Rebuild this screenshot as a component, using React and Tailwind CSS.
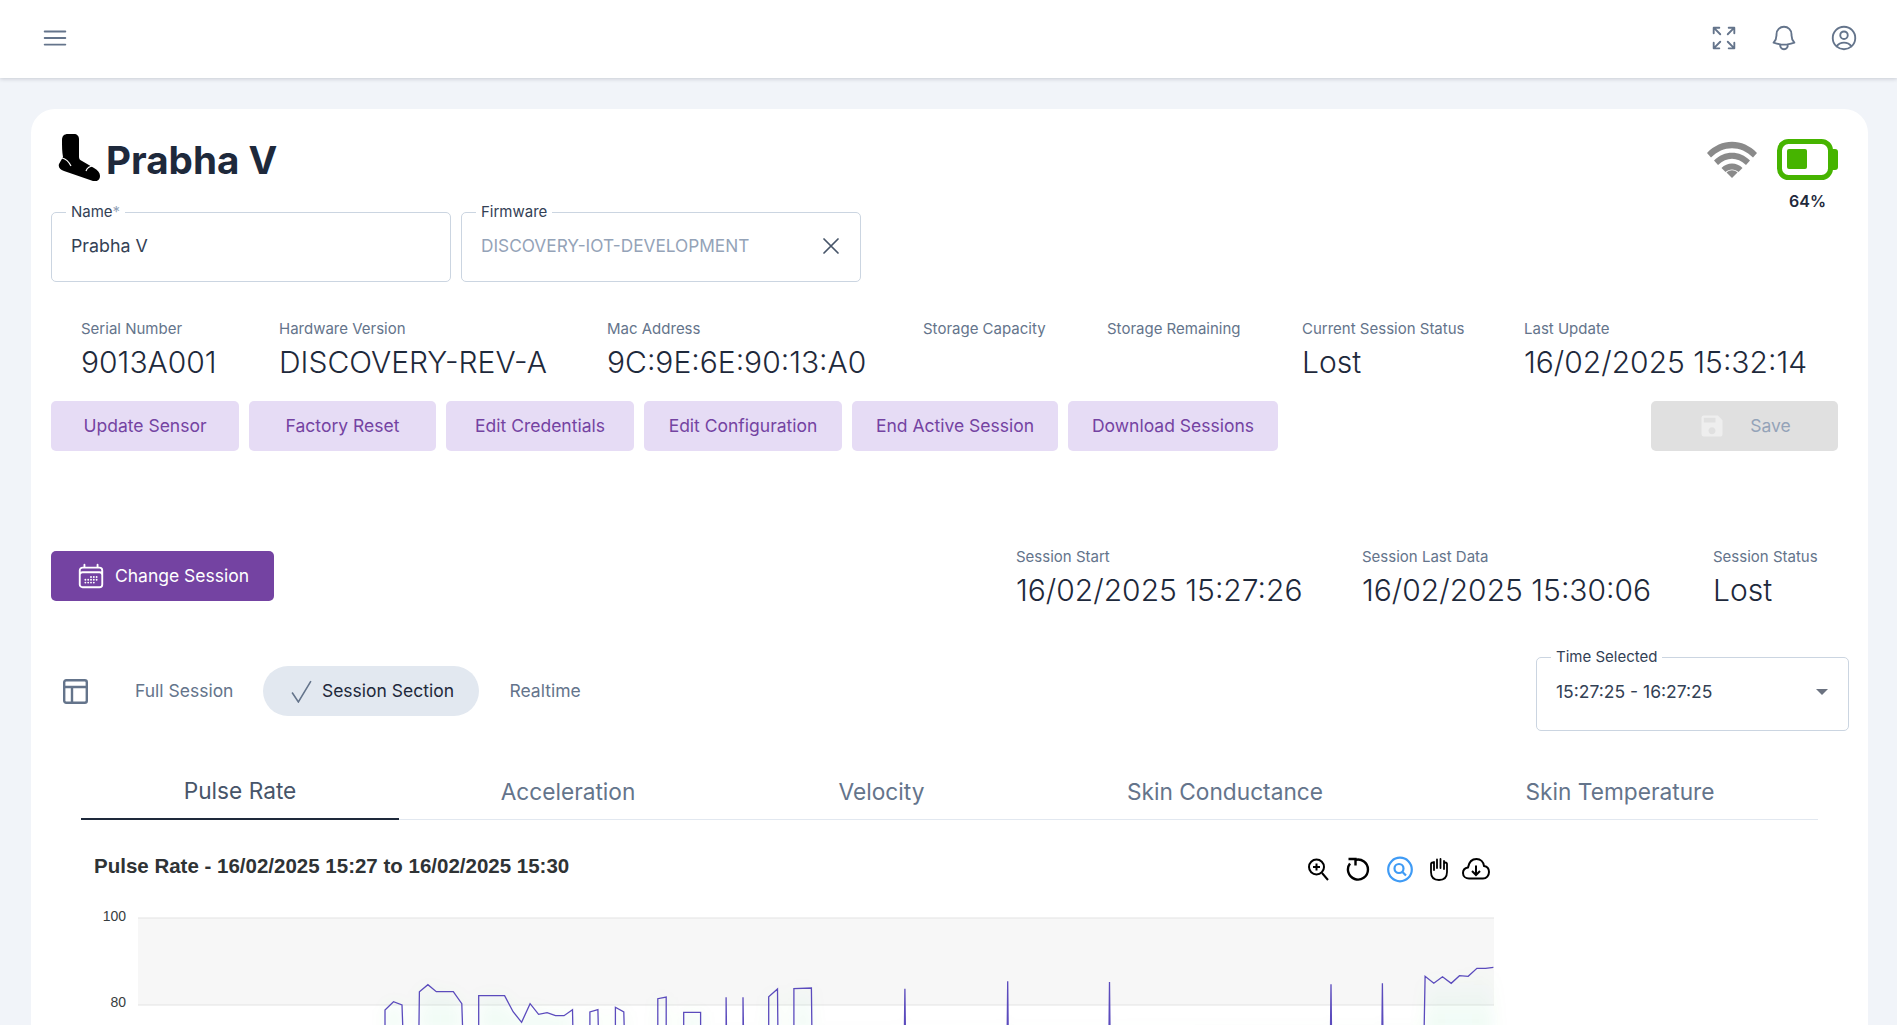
import { HiOutlineBars3, HiOutlineArrowsPointingOut, HiOutlineBell, HiOutlineUserCircle, HiOutlineCalendarDays, HiOutlineXMark } from 'react-icons/hi2';
import { MdSave } from 'react-icons/md';

const FONT = "font-['Inter',sans-serif]";

const details = [
  ['Serial Number', '9013A001'],
  ['Hardware Version', 'DISCOVERY-REV-A'],
  ['Mac Address', '9C:9E:6E:90:13:A0'],
  ['Storage Capacity', ''],
  ['Storage Remaining', ''],
  ['Current Session Status', 'Lost'],
  ['Last Update', '16/02/2025 15:32:14'],
];

const actions = [
  ['Update Sensor', 'w-[188px]'],
  ['Factory Reset', 'w-[187px]'],
  ['Edit Credentials', 'w-[188px]'],
  ['Edit Configuration', 'w-[198px]'],
  ['End Active Session', 'w-[206px]'],
  ['Download Sessions', 'w-[210px]'],
];

const tabs = [
  ['Pulse Rate', 'w-[318px]'],
  ['Acceleration', 'w-[338px]'],
  ['Velocity', 'w-[289px]'],
  ['Skin Conductance', 'w-[398px]'],
  ['Skin Temperature', 'w-[392px]'],
];

// traced from the reference: [x, y] in crop coords
const z4 = [[728,575],[728,513],[747,488],[766,498],[768,575],[804,575],[805,458],[824,437],[843,458],[881,458],[900,494],[902,575],[938,575],[938,470],[996,470],[1015,518],[1034,550],[1053,494],[1072,526],[1091,521],[1110,530],[1129,530],[1148,512],[1149,575],[1187,575],[1187,519],[1205,512],[1206,575],[1244,575],[1244,505],[1263,519],[1264,575],[1339,575],[1339,479],[1358,474],[1358,575],[1397,575],[1397,520],[1435,520],[1435,575],[1492,575],[1492,475],[1493,575],[1530,575],[1530,475],[1531,575]];
const z5 = [[18,575],[18,473],[36,450],[37,575],[70,575],[70,449],[106,447],[107,575],[298,575],[299,449],[300,575],[510,575],[511,427],[512,575],[720,575],[721,429],[722,575],[1177,575],[1178,436],[1179,575],[1283,575],[1284,433],[1285,575],[1370,575],[1372,412],[1390,433],[1408,413],[1426,433],[1443,410],[1461,412],[1479,388],[1497,388],[1513,385]];
const linePoints = [
  ...z4.map(([x, y]) => [60 + x / 2.24, 840 + y / 3]),
  ...z5.map(([x, y]) => [760 + x / 2.063, 840 + y / 3]),
].map(([x, y]) => `${x.toFixed(1)},${y.toFixed(1)}`).join(' ');

function Outlined({ label, className, children }) {
  return (
    <div className={`relative rounded-[5px] border border-[#cbd5e1] ${className}`}>
      <span className="absolute -top-[10px] left-[14px] bg-white px-[5px] text-[15px] leading-[18px] text-[#334155]">{label}</span>
      {children}
    </div>
  );
}

function Stat({ label, value, className = '' }) {
  return (
    <div className={className}>
      <p className="text-[15px] leading-[18px] text-[#64748b]">{label}</p>
      <p className="mt-[6px] h-[36px] text-[30px] leading-[36px] font-light whitespace-nowrap text-[#1e293b]">{value}</p>
    </div>
  );
}

function SockIcon() {
  return (
    <svg viewBox="0 0 42 48" className="w-[42px] h-[48px]">
      <path d="M4 7c0-4 2-6 6-6h6c3 0 5 2 5 5v18c0 2 1 3 3 4l12 7c4 2 6 5 6 8 0 4-3 6-7 5L6 38c-4-1-6-4-5-7l4-7c-1-5-1-11-1-17z" fill="#000" />
      <path d="M4 25c4 1 7 4 9 8" stroke="#fff" strokeWidth="1.2" fill="none" />
      <path d="M28 38c1-3 4-5 8-5" stroke="#fff" strokeWidth="1.2" fill="none" />
    </svg>
  );
}

function WifiIcon() {
  return (
    <svg viewBox="0 0 50 37" className="w-[50px] h-[37px]" fill="#8a8a8a">
      <path d="M0 12C14 -3 36 -3 50 12l-4 4.500C34 4 16 4 4 16.500z" />
      <path d="M7 19.500C17 9 33 9 43 19.500l-4 4.500C30 15.500 20 15.500 11 24z" />
      <path d="M14.500 27C20 21 30 21 35.500 27l-4 4C28 27.500 22 27.500 18.500 31z" />
      <path d="M19.500 31.500C23 28.500 27 28.500 30.500 31.500L25 37z" />
    </svg>
  );
}

function BatteryIcon() {
  return (
    <svg viewBox="0 0 61 41" className="w-[61px] h-[41px]">
      <rect x="2.500" y="2.500" width="51" height="36" rx="9" fill="none" stroke="#46b400" strokeWidth="5" />
      <path d="M55 10h3a3 3 0 0 1 3 3v15a3 3 0 0 1-3 3h-3z" fill="#46b400" />
      <rect x="10" y="10" width="20" height="20" rx="2" fill="#46b400" />
    </svg>
  );
}

function LayoutIcon() {
  return (
    <svg viewBox="0 0 25 25" className="w-[25px] h-[25px]" fill="none" stroke="#64748b" strokeWidth="2.400">
      <rect x="1.200" y="1.200" width="22.600" height="22.600" rx="2" />
      <path d="M1 8h23M9 8v16" />
    </svg>
  );
}

function ChartTools() {
  return (
    <div className="flex items-center mt-[6px]">
      <svg viewBox="0 0 22 24" className="w-[22px] h-[24px]" fill="none" stroke="#000" strokeWidth="2">
        <circle cx="9.500" cy="10" r="7.500" />
        <path d="M15 16l6 7M9.500 6.500v7M6 10h7" />
      </svg>
      <svg viewBox="0 0 24 24" className="w-[24px] h-[24px] ml-[17px]" fill="none" stroke="#000" strokeWidth="2.400">
        <path d="M9 3a10 10 0 1 1-5 3.500" />
        <path d="M2.500 2h7v6.500" />
      </svg>
      <svg viewBox="0 0 26 27" className="w-[26px] h-[27px] ml-[17px]" fill="none" stroke="#3f9bf5" strokeWidth="2.200">
        <circle cx="13" cy="13.500" r="11.800" />
        <circle cx="12" cy="12.500" r="4.500" />
        <path d="M15.500 16l3.500 3.500" />
      </svg>
      <svg viewBox="0 0 20 24" className="w-[20px] h-[24px] ml-[16px]" fill="none" stroke="#000" strokeWidth="1.800" strokeLinecap="round">
        <path d="M5 13V5M8 11V2.500M11.500 11V2M15 12V4M5 7c0-2-3-2-3 0v8c0 5 3 8 8 8s8-3 8-8V7c0-2-3-2-3 0" />
      </svg>
      <svg viewBox="0 0 28 22" className="w-[28px] h-[22px] ml-[13px]" fill="none" stroke="#000" strokeWidth="2">
        <path d="M7 20.500c-3 0-6-2-6-5.500 0-3 2-5 5-5.500C7 4 10.500 1 14.500 1c4 0 7 3 7.500 7 3 .5 5 3 5 6 0 3.500-2.500 6.500-6 6.500z" />
        <path d="M14 7.500v9M10 13l4 4 4-4" />
      </svg>
    </div>
  );
}

function PulseChart() {
  return (
    <svg viewBox="81 905 1440 130" className="block w-[1440px] h-[130px] mt-[20px]">
      <defs>
        <linearGradient id="pulseFill" x1="0" y1="0" x2="0" y2="1">
          <stop offset="0" stopColor="#22c55e" stopOpacity="0" />
          <stop offset="1" stopColor="#22c55e" stopOpacity="0.07" />
        </linearGradient>
        <filter id="pulseBlur" x="-5%" y="-20%" width="110%" height="140%">
          <feGaussianBlur stdDeviation="8" />
        </filter>
      </defs>
      <rect x="138" y="919" width="1356" height="87" fill="#f7f7f7" />
      <path d="M138 919H1494M138 1006H1494" stroke="#e3e3e3" strokeWidth="1" />
      <polygon points={`${linePoints} 1493,1035 1400,1035`} fill="url(#pulseFill)" filter="url(#pulseBlur)" />
      <text x="126" y="922" textAnchor="end" fontFamily="Liberation Sans" fontSize="14" fill="#373d3f">100</text>
      <text x="126" y="1008" textAnchor="end" fontFamily="Liberation Sans" fontSize="14" fill="#373d3f">80</text>
      <polyline points={linePoints} fill="none" stroke="#5b4bbd" strokeWidth="1.300" />
    </svg>
  );
}

export default function App() {
  return (
    <div className={`h-screen overflow-hidden bg-[#f1f4f9] ${FONT}`}>
      <header className="h-[78px] pb-[2px] bg-white shadow-[0_1px_4px_rgba(15,23,42,0.18)] flex items-center justify-between pl-[40px] pr-[38px]">
        <HiOutlineBars3 className="w-[30px] h-[30px] text-[#64748b]" />
        <div className="flex items-center gap-[30px] text-[#64748b]">
          <HiOutlineArrowsPointingOut className="w-[30px] h-[30px]" />
          <HiOutlineBell className="w-[30px] h-[30px]" />
          <HiOutlineUserCircle className="w-[30px] h-[30px]" />
        </div>
      </header>

      <main className="pl-[31px] pr-[29px] pt-[31px]">
        <div className="rounded-[24px] bg-white pl-[20px] pr-[19px] h-[1200px]">
          <div className="flex justify-between pt-[24px] h-[103px]">
            <div className="flex items-start pl-[7px]">
              <SockIcon />
              <h1 className="ml-[6px] mt-[3px] text-[38.600px] leading-[48px] font-bold text-[#1e293b]">Prabha V</h1>
            </div>
            <div className="flex items-start pr-[11px] pt-[6px] gap-[20px]">
              <div className="pt-[2px]"><WifiIcon /></div>
              <div className="flex flex-col items-center">
                <BatteryIcon />
                <span className="mt-[11px] text-[16px] leading-[20px] font-semibold text-[#1e293b]">64%</span>
              </div>
            </div>
          </div>

          <div className="flex gap-[10px]">
            <Outlined label={<>Name<span className="text-[#94a3b8]">*</span></>} className="w-[400px] h-[70px]">
              <p className="pl-[19px] pt-[22px] text-[17.800px] leading-[22px] text-[#334155]">Prabha V</p>
            </Outlined>
            <Outlined label="Firmware" className="w-[400px] h-[70px] flex">
              <p className="flex-1 pl-[19px] pt-[22px] text-[17.250px] leading-[22px] text-[#94a3b8]">DISCOVERY-IOT-DEVELOPMENT</p>
              <HiOutlineXMark className="w-[28px] h-[28px] mr-[15px] mt-[19px] text-[#475569]" />
            </Outlined>
          </div>

          <div className="mt-[38px] pl-[30px] grid grid-cols-[198px_328px_316px_184px_195px_222px_1fr]">
            {details.map(([label, value]) => <Stat key={label} label={label} value={value} />)}
          </div>

          <div className="mt-[21px] flex justify-between pr-[11px]">
            <div className="flex gap-[10px]">
              {actions.map(([label, width]) => (
                <button key={label} className={`${width} h-[50px] rounded-[5px] bg-[#e6dcf5] text-[17.500px] text-[#7443a2]`}>{label}</button>
              ))}
            </div>
            <button className="w-[187px] h-[50px] rounded-[5px] bg-[#e0e0e0] flex items-center justify-center gap-[24px] text-[17.500px] text-[#94a3b8]">
              <MdSave className="w-[28px] h-[28px] text-[#eeeeee]" />
              Save
            </button>
          </div>

          <div className="mt-[100px] flex justify-between items-start">
            <button className="w-[223px] h-[50px] rounded-[5px] bg-[#7443a2] flex items-center justify-center gap-[9px] text-[17.500px] text-white">
              <HiOutlineCalendarDays className="w-[30px] h-[30px]" />
              Change Session
            </button>
            <div className="-mt-[3px] grid grid-cols-[346px_351px_136px]">
              <Stat label="Session Start" value="16/02/2025 15:27:26" />
              <Stat label="Session Last Data" value="16/02/2025 15:30:06" />
              <Stat label="Session Status" value="Lost" />
            </div>
          </div>

          <div className="mt-[48px] flex justify-between items-start">
            <div className="flex items-center mt-[10px] pl-[12px] text-[17.500px] text-[#64748b]">
              <LayoutIcon />
              <span className="ml-[47px]">Full Session</span>
              <span className="ml-[30px] w-[216px] h-[50px] rounded-full bg-[#e2e8f0] flex items-center justify-center gap-[10px] pl-[2px] text-[#1e293b]">
                <svg viewBox="0 0 20 22" className="w-[21px] h-[23px]" fill="none" stroke="#64748b" strokeWidth="1.500"><path d="M1 12l6 9L19 1" /></svg>
                Session Section
              </span>
              <span className="ml-[30px]">Realtime</span>
            </div>
            <Outlined label="Time Selected" className="w-[313px] h-[74px] mt-[1px]">
              <div className="flex items-center justify-between pl-[19px] pr-[20px] pt-[23px]">
                <p className="text-[17.500px] leading-[22px] text-[#334155]">15:27:25 - 16:27:25</p>
                <span className="w-0 h-0 border-x-[6px] border-x-transparent border-t-[6px] border-t-[#6b7280]" />
              </div>
            </Outlined>
          </div>

          <div className="mt-[30px] ml-[30px] mr-[31px] flex border-b border-[#e2e8f0] h-[59px]">
            {tabs.map(([label, width], i) => (
              <div key={label} className={`${width} h-[59px] pt-[3px] flex items-center justify-center text-[22.700px] ${i === 0 ? 'border-b-2 border-[#1e293b] text-[#475569]' : 'text-[#64748b]'}`}>{label}</div>
            ))}
          </div>

          <div className="mt-[28px] ml-[30px]">
            <div className="flex items-center justify-between w-[1409px] h-[36px] pl-[13px]">
              <h3 className="font-['Liberation_Sans',sans-serif] font-bold text-[20.500px] text-[#2f3335]">Pulse Rate - 16/02/2025 15:27 to 16/02/2025 15:30</h3>
              <ChartTools />
            </div>
            <PulseChart />
          </div>
        </div>
      </main>
    </div>
  );
}
